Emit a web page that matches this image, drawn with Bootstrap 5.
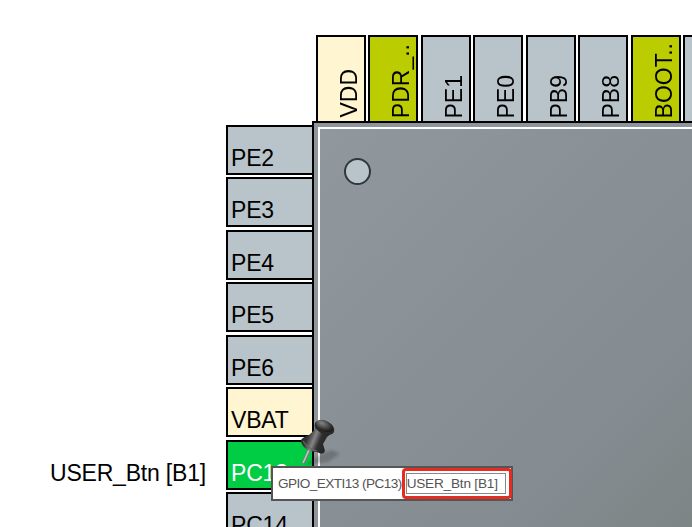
<!DOCTYPE html>
<html lang="en">
<head>
<meta charset="utf-8">
<title>Pinout view</title>
<link href="https://cdn.jsdelivr.net/npm/bootstrap@5.3.0/dist/css/bootstrap.min.css" rel="stylesheet">
<style>
body{font-family:"Liberation Sans",Arial,sans-serif;background:#fff;color:#000}
.canvas{width:692px;height:527px;font-size:23px;line-height:26px}
.pins-top{left:316px;top:35px;gap:2.46px}
.pins-left{left:226px;top:125px;gap:2.46px}
.pin{border:2px solid #000;background:#b9c4ca;flex:none;white-space:nowrap}
.pins-left .pin{width:88px;height:50px;padding:0 0 2px 3px;letter-spacing:-.2px}
.pins-top .pin{width:50px;height:88px;padding:0 2px 3px 0}
.pins-top .pin span{writing-mode:vertical-rl;transform:rotate(180deg)}
.pin.power{background:#fff5d0}
.pin.system{background:#bbcc00}
.pin.active{background:#00cc44;color:#fff}
.chip{left:312px;top:121px;width:600px;height:600px;border:2px solid #000;background:#8f969b;padding:4px}
.die{border:2px solid #fff;background:linear-gradient(135deg,#91989d 0,#899197 27%,#848c92 50%,#7d8585 65%,#7c8484 100%);padding:29px 0 0 24px}
.dot{width:27px;height:27px;border:2px solid #2f383a;background:#b9c4ca}
.user-label{left:50px;top:460px;letter-spacing:-.2px}
.tack{left:294px;top:412px}
.tip{left:271px;top:466px;width:242px;height:35px;border:2px solid #555;background:#fff;color:#555;font-size:13.6px;line-height:16px;padding-left:5px;white-space:nowrap}
.tip-name{width:124px;letter-spacing:-.56px}
.tip-mark{width:110px;height:31px;border:3px solid #e62b20;border-radius:4px;padding:2px 3px 2px 1px}
.tip-field{border:1px solid #888;width:100px;height:21px;letter-spacing:-.2px}
</style>
<script src="https://cdn.jsdelivr.net/npm/bootstrap@5.3.0/dist/js/bootstrap.bundle.min.js"></script>
</head>
<body class="overflow-hidden">
<main class="canvas position-relative overflow-hidden">
  <div class="pins-top position-absolute d-flex">
    <div class="pin power d-flex align-items-end justify-content-end"><span>VDD</span></div>
    <div class="pin system d-flex align-items-end justify-content-end"><span>PDR_..</span></div>
    <div class="pin d-flex align-items-end justify-content-end"><span>PE1</span></div>
    <div class="pin d-flex align-items-end justify-content-end"><span>PE0</span></div>
    <div class="pin d-flex align-items-end justify-content-end"><span>PB9</span></div>
    <div class="pin d-flex align-items-end justify-content-end"><span>PB8</span></div>
    <div class="pin system d-flex align-items-end justify-content-end"><span>BOOT..</span></div>
    <div class="pin"></div>
  </div>
  <div class="pins-left position-absolute d-flex flex-column">
    <div class="pin d-flex align-items-end">PE2</div>
    <div class="pin d-flex align-items-end">PE3</div>
    <div class="pin d-flex align-items-end">PE4</div>
    <div class="pin d-flex align-items-end">PE5</div>
    <div class="pin d-flex align-items-end">PE6</div>
    <div class="pin power d-flex align-items-end">VBAT</div>
    <div class="pin active d-flex align-items-end">PC13</div>
    <div class="pin d-flex align-items-end">PC14</div>
  </div>
  <div class="chip position-absolute">
    <div class="die w-100 h-100"><div class="dot rounded-circle"></div></div>
  </div>
  <div class="user-label position-absolute text-nowrap">USER_Btn [B1]</div>
  <svg class="tack position-absolute" width="52" height="56" viewBox="294 412 52 56" aria-hidden="true">
    <defs>
      <linearGradient id="metal" x1="0" y1="0" x2="1" y2=".4"><stop offset="0" stop-color="#151515"/><stop offset=".35" stop-color="#333"/><stop offset=".55" stop-color="#858585"/><stop offset=".72" stop-color="#303030"/><stop offset="1" stop-color="#222"/></linearGradient>
      <radialGradient id="cap" cx=".3" cy=".35" r=".7"><stop offset="0" stop-color="#858585"/><stop offset=".5" stop-color="#505050"/><stop offset="1" stop-color="#1a1a1a"/></radialGradient>
      <filter id="soft"><feGaussianBlur stdDeviation="1.8"/></filter>
      <filter id="edge"><feGaussianBlur stdDeviation=".55"/></filter>
    </defs>
    <path d="M304 465L321 454L332 450L340 454L328 462Z" fill="#333" opacity=".3" filter="url(#soft)"/>
    <g filter="url(#edge)">
      <path d="M309.500 450L303 463.500" stroke="#737b76" stroke-width="3.400"/>
      <path d="M309 450L303 463" stroke="#c5cbc7" stroke-width="1.500"/>
      <path d="M300.500 440.500Q304 436 309 435L314.500 430L315 424L332 433L327 437L323 444L325 451Q323 456 317 452Q304 452 300.500 440.500Z" fill="url(#metal)"/>
      <path d="M303 441Q307 448 317 451" fill="none" stroke="#666" stroke-width="1.200"/>
      <ellipse cx="324.500" cy="427.500" rx="10.500" ry="6.500" transform="rotate(25 324.500 427.500)" fill="#2a2a2a"/>
      <ellipse cx="324.500" cy="426" rx="9" ry="5" transform="rotate(25 324.500 426)" fill="url(#cap)"/>
    </g>
  </svg>
  <div class="tip position-absolute d-flex align-items-center">
    <span class="tip-name">GPIO_EXTI13 (PC13)</span>
    <div class="tip-mark d-flex align-items-center flex-shrink-0"><div class="tip-field d-flex align-items-center">USER_Btn [B1]</div></div>
  </div>
</main>
</body>
</html>
